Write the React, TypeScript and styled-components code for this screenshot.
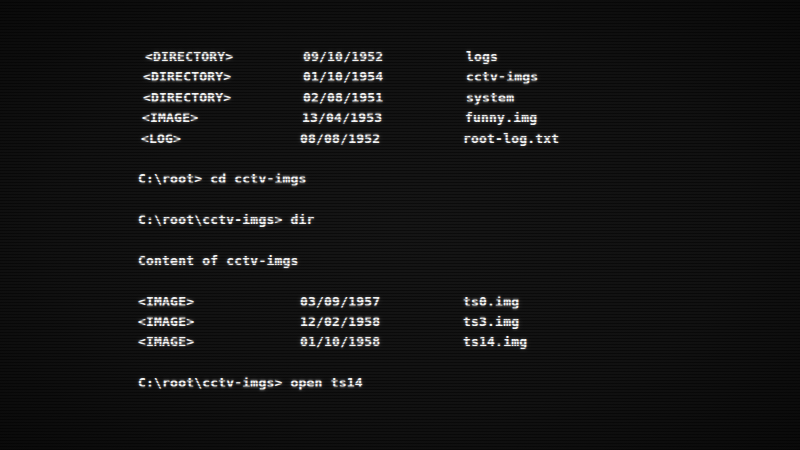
import React from "react";
import styled, { createGlobalStyle } from "styled-components";

const Global = createGlobalStyle`
  html, body { margin: 0; padding: 0; background: #0b0b0b; }
  #root { width: 800px; height: 450px; }
`;

const Screen = styled.div`
  position: relative;
  width: 800px;
  height: 450px;
  overflow: hidden;
  background: radial-gradient(ellipse at 50% 50%, #151515 0%, #111111 60%, #0a0a0a 100%);
  box-sizing: border-box;
  padding: 47px 0 0 138px;
  font-family: "DejaVu Sans Mono", "Liberation Mono", monospace;
  font-weight: bold;
  font-size: 13px;
  letter-spacing: 0.2px;
  color: #f2f2f2;
  text-shadow: 0 0 2px rgba(255, 255, 255, 0.55), 0 0 6px rgba(255, 255, 255, 0.18);
`;

const Scanlines = styled.div`
  position: absolute;
  inset: 0;
  pointer-events: none;
  background: repeating-linear-gradient(
    to bottom,
    rgba(0, 0, 0, 0) 0px,
    rgba(0, 0, 0, 0) 2px,
    rgba(0, 0, 0, 0.45) 2px,
    rgba(0, 0, 0, 0.45) 3px
  );
`;

const Output = styled.div`
  display: flex;
  flex-direction: column;
`;

const Line = styled.div`
  height: 20.4px;
  line-height: 20.4px;
  white-space: pre;
`;

const Entry = styled.div<{ $shift: number }>`
  display: grid;
  grid-template-columns: 162px 163px auto;
  height: 20.4px;
  line-height: 20.4px;
  padding-left: ${(p) => p.$shift}px;
  white-space: pre;
`;

const Kind = styled.span<{ $lead: number }>`
  padding-left: ${(p) => p.$lead}px;
`;

type Row = { kind: string; date: string; name: string; shift: number; lead: number };

const rootRows: Row[] = [
  { kind: "<DIRECTORY>", date: "09/10/1952", name: "logs", shift: 3, lead: 4 },
  { kind: "<DIRECTORY>", date: "01/10/1954", name: "cctv-imgs", shift: 3, lead: 2 },
  { kind: "<DIRECTORY>", date: "02/08/1951", name: "system", shift: 3, lead: 2 },
  { kind: "<IMAGE>", date: "13/04/1953", name: "funny.img", shift: 2, lead: 2 },
  { kind: "<LOG>", date: "08/08/1952", name: "root-log.txt", shift: 0, lead: 3 },
];

const imgRows: Row[] = [
  { kind: "<IMAGE>", date: "03/09/1957", name: "ts0.img", shift: 0, lead: 0 },
  { kind: "<IMAGE>", date: "12/02/1958", name: "ts3.img", shift: 0, lead: 0 },
  { kind: "<IMAGE>", date: "01/10/1958", name: "ts14.img", shift: 0, lead: 0 },
];

const Rows = ({ rows }: { rows: Row[] }) => (
  <>
    {rows.map((r, i) => (
      <Entry key={i} $shift={r.shift}>
        <Kind $lead={r.lead}>{r.kind}</Kind>
        <span>{r.date}</span>
        <span>{r.name}</span>
      </Entry>
    ))}
  </>
);

export default function App() {
  return (
    <>
      <Global />
      <Screen>
        <Output>
          <Rows rows={rootRows} />
          <Line />
          <Line>{"C:\\root> cd cctv-imgs"}</Line>
          <Line />
          <Line>{"C:\\root\\cctv-imgs> dir"}</Line>
          <Line />
          <Line>Content of cctv-imgs</Line>
          <Line />
          <Rows rows={imgRows} />
          <Line />
          <Line>{"C:\\root\\cctv-imgs> open ts14"}</Line>
        </Output>
        <Scanlines />
      </Screen>
    </>
  );
}
